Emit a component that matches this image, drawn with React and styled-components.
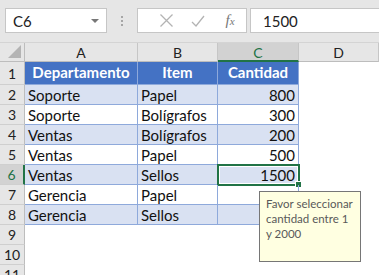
import React from "react";
import styled, { createGlobalStyle, css } from "styled-components";

const Global = createGlobalStyle`
  html, body { margin: 0; padding: 0; background: #fff; }
  body { font-family: Lato, "Liberation Sans", sans-serif; }
  * { box-sizing: border-box; }
`;

const Root = styled.div`
  width: 379px;
  height: 275px;
  overflow: hidden;
  background: #fff;
`;

const Toolbar = styled.div`
  height: 43px;
  background: #e6e6e6;
  display: flex;
  align-items: flex-start;
  padding: 8px 0 0 5px;
  border-bottom: 1px solid #d4d4d4;
`;

const Box = styled.div`
  height: 25px;
  background: #fff;
  border: 1px solid #c6c6c6;
  display: flex;
  align-items: center;
`;

const NameBox = styled(Box)`
  width: 102px;
  padding: 0 0 0 7px;
  font-size: 15px;
  color: #222;
  justify-content: space-between;
`;

const Caret = styled.span`
  width: 0;
  height: 0;
  border-left: 4px solid transparent;
  border-right: 4px solid transparent;
  border-top: 4px solid #777;
  margin-right: 7px;
`;

const Dots = styled.div`
  width: 30px;
  height: 25px;
  display: flex;
  flex-direction: column;
  align-items: center;
  justify-content: center;
  gap: 2px;
  & > span { width: 2px; height: 2px; background: #a6a6a6; }
`;

const ButtonBox = styled(Box)`
  width: 110px;
  padding: 0 0 0 12px;
`;

const IconSlot = styled.div`
  width: 34px;
  height: 23px;
  display: flex;
  align-items: center;
  justify-content: center;
  color: #777;
  font-family: "Liberation Serif", serif;
  font-style: italic;
  font-size: 15px;
`;

const Sub = styled.span`
  font-size: 11px;
`;

const FormulaBox = styled(Box)`
  flex: 1;
  margin-left: 3px;
  margin-right: -2px;
  padding-left: 12px;
  font-size: 15px;
  color: #222;
`;

const Sheet = styled.div`
  display: grid;
  grid-template-columns: 25px 113px 80px 81px 80px;
  grid-template-rows: 19px 23px repeat(10, 20px);
`;

const ColHead = styled.div`
  background: ${(p) => (p.$active ? "#d2d2d2" : "#e6e6e6")};
  color: ${(p) => (p.$active ? "#217346" : "#222")};
  border-right: 1px solid #c6c6c6;
  border-bottom: ${(p) => (p.$active ? "2px solid #217346" : "1px solid #bdbdbd")};
  display: flex;
  align-items: center;
  justify-content: center;
  font-size: 14px;
  padding-top: ${(p) => (p.$active ? "1px" : "0")};
`;

const Corner = styled.div`
  background: #e6e6e6;
  border-right: 1px solid #bdbdbd;
  border-bottom: 1px solid #bdbdbd;
  display: flex;
  align-items: flex-end;
  justify-content: flex-end;
  padding: 0 3px 3px 0;
`;

const RowHead = styled.div`
  background: ${(p) => (p.$active ? "#d2d2d2" : "#e6e6e6")};
  color: ${(p) => (p.$active ? "#217346" : "#222")};
  border-right: ${(p) => (p.$active ? "2px solid #217346" : "1px solid #bdbdbd")};
  border-bottom: 1px solid #cfcfcf;
  display: flex;
  align-items: center;
  justify-content: center;
  font-size: 14px;
`;

const Cell = styled.div`
  position: relative;
  display: flex;
  align-items: center;
  padding: 0 3px;
  font-size: 15px;
  color: #111;
  white-space: nowrap;
  justify-content: ${(p) => (p.$num ? "flex-end" : p.$head ? "center" : "flex-start")};
  ${(p) =>
    p.$table &&
    css`
      border-right: 1px solid #8ea9db;
      border-bottom: 1px solid #8ea9db;
    `}
  ${(p) =>
    p.$head &&
    css`
      background: #4472c4;
      color: #fff;
      font-weight: 700;
      padding-bottom: 2px;
    `}
  ${(p) => p.$band && css`background: #d9e1f2;`}
`;

const Selection = styled.div`
  position: absolute;
  left: -1px;
  top: -1px;
  width: 83px;
  height: 22px;
  border: 2px solid #217346;
  box-shadow: inset 0 0 0 1px #fff;
  pointer-events: none;
`;

const Handle = styled.div`
  position: absolute;
  right: -4px;
  bottom: -4px;
  width: 7px;
  height: 7px;
  background: #217346;
  border: 1px solid #fff;
`;

const Tooltip = styled.div`
  position: absolute;
  left: 41px;
  top: 26px;
  width: 102px;
  height: 71px;
  background: #ffffe1;
  border: 1px solid #767676;
  padding: 4px 0 0 6px;
  font-size: 11.5px;
  line-height: 15px;
  color: #595959;
  white-space: nowrap;
  z-index: 2;
`;

const TipLine = styled.div``;

const rows = [
  ["Soporte", "Papel", "800"],
  ["Soporte", "Bolígrafos", "300"],
  ["Ventas", "Bolígrafos", "200"],
  ["Ventas", "Papel", "500"],
  ["Ventas", "Sellos", "1500"],
  ["Gerencia", "Papel", ""],
  ["Gerencia", "Sellos", ""],
];

export default function App() {
  return (
    <Root>
      <Global />
      <Toolbar>
        <NameBox>
          <span>C6</span>
          <Caret />
        </NameBox>
        <Dots>
          <span />
          <span />
          <span />
        </Dots>
        <ButtonBox>
          <IconSlot>
            <svg width="15" height="15" viewBox="0 0 15 15">
              <path d="M1.5 1.5 L13.5 13.5 M13.5 1.5 L1.5 13.5" stroke="#b3b3b3" strokeWidth="1.3" fill="none" />
            </svg>
          </IconSlot>
          <IconSlot>
            <svg width="14" height="14" viewBox="0 0 14 14">
              <path d="M1 8 L5 12 L13 2" stroke="#b3b3b3" strokeWidth="1.3" fill="none" />
            </svg>
          </IconSlot>
          <IconSlot>
            f<Sub>x</Sub>
          </IconSlot>
        </ButtonBox>
        <FormulaBox>1500</FormulaBox>
      </Toolbar>
      <Sheet>
        <Corner>
          <svg width="13" height="13" viewBox="0 0 13 13">
            <path d="M13 0 L13 13 L0 13 Z" fill="#b4b4b4" />
          </svg>
        </Corner>
        <ColHead>A</ColHead>
        <ColHead>B</ColHead>
        <ColHead $active>C</ColHead>
        <ColHead>D</ColHead>

        <RowHead>1</RowHead>
        <Cell $table $head>Departamento</Cell>
        <Cell $table $head>Item</Cell>
        <Cell $table $head>Cantidad</Cell>
        <Cell />

        {rows.map((r, i) => {
          const n = i + 2;
          const band = n % 2 === 0;
          return (
            <React.Fragment key={n}>
              <RowHead $active={n === 6}>{n}</RowHead>
              <Cell $table $band={band}>{r[0]}</Cell>
              <Cell $table $band={band}>{r[1]}</Cell>
              <Cell $table $band={band} $num>
                {r[2]}
                {n === 6 && (
                  <>
                    <Selection>
                      <Handle />
                    </Selection>
                    <Tooltip>
                      <TipLine>Favor seleccionar</TipLine>
                      <TipLine>cantidad entre 1</TipLine>
                      <TipLine>y 2000</TipLine>
                    </Tooltip>
                  </>
                )}
              </Cell>
              <Cell />
            </React.Fragment>
          );
        })}

        {[9, 10, 11].map((n) => (
          <React.Fragment key={n}>
            <RowHead>{n}</RowHead>
            <Cell />
            <Cell />
            <Cell />
            <Cell />
          </React.Fragment>
        ))}
      </Sheet>
    </Root>
  );
}
